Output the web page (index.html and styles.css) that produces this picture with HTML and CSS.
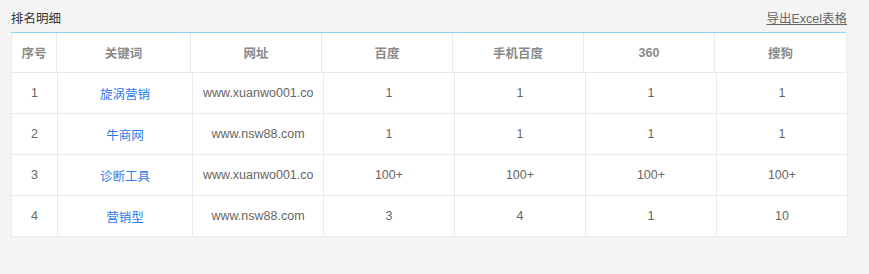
FILE: index.html
```html
<!DOCTYPE html>
<html lang="zh-CN">
<head>
    <meta charset="UTF-8">
    <title>排名明细</title>
    <link rel="stylesheet" href="styles.css">
</head>
<body>

<div class="panel">
    <div class="panel-head">
        <span class="panel-title">排名明细</span>
        <a class="export-link" href="#">导出Excel表格</a>
    </div>

    <div class="table-head">
        <table class="rank-table">
            <colgroup>
                <col class="c-no"><col class="c-kw"><col><col><col><col><col class="c-last">
            </colgroup>
            <tr>
                <th>序号</th>
                <th>关键词</th>
                <th>网址</th>
                <th>百度</th>
                <th>手机百度</th>
                <th>360</th>
                <th>搜狗</th>
            </tr>
        </table>
    </div>

    <div class="table-body">
        <table class="rank-table">
            <colgroup>
                <col class="c-no2"><col class="c-kw2"><col><col><col><col><col>
            </colgroup>
            <tr>
                <td>1</td>
                <td><a class="kw" href="#">旋涡营销</a></td>
                <td><div class="cell-url">www.xuanwo001.com</div></td>
                <td>1</td>
                <td>1</td>
                <td>1</td>
                <td>1</td>
            </tr>
            <tr>
                <td>2</td>
                <td><a class="kw" href="#">牛商网</a></td>
                <td><div class="cell-url">www.nsw88.com</div></td>
                <td>1</td>
                <td>1</td>
                <td>1</td>
                <td>1</td>
            </tr>
            <tr>
                <td>3</td>
                <td><a class="kw" href="#">诊断工具</a></td>
                <td><div class="cell-url">www.xuanwo001.com</div></td>
                <td>100+</td>
                <td>100+</td>
                <td>100+</td>
                <td>100+</td>
            </tr>
            <tr>
                <td>4</td>
                <td><a class="kw" href="#">营销型</a></td>
                <td><div class="cell-url">www.nsw88.com</div></td>
                <td>3</td>
                <td>4</td>
                <td>1</td>
                <td>10</td>
            </tr>
        </table>
    </div>
</div>

</body>
</html>
```

FILE: styles.css
```css
body {
    margin: 0;
    padding: 0;
    background-color: #f4f4f4;
    font-family: "Liberation Sans", Arial, "Noto Sans CJK SC", sans-serif;
    font-size: 12.5px;
    color: #666;
}

.panel {
    width: 836px;
    margin-left: 11px;
}

.panel-head {
    display: flex;
    justify-content: space-between;
    align-items: center;
    height: 29px;
    padding-top: 3px;
}

.panel-title {
    color: #333;
}

.export-link {
    color: #666;
    text-decoration: underline;
}

.table-head {
    width: 835px;
    border-top: 1px solid #8ed5f6;
}

.table-body {
    width: 836px;
    background-color: #fff;
}

.rank-table {
    width: 100%;
    border-collapse: collapse;
    table-layout: fixed;
    background-color: #fff;
}

.rank-table col {
    width: 131px;
}

.rank-table .c-no {
    width: 45px;
}

.rank-table .c-kw {
    width: 134px;
}

.rank-table .c-last {
    width: 132px;
}

.rank-table .c-no2 {
    width: 46px;
}

.rank-table .c-kw2 {
    width: 135px;
}

.rank-table th,
.rank-table td {
    height: 40px;
    padding: 0 10px;
    border: 1px solid #e8eaf1;
    text-align: center;
    font-weight: normal;
    color: #666;
    white-space: nowrap;
}

.rank-table th {
    height: 39px;
    padding: 0 4px;
    font-weight: bold;
    color: #8a8a8a;
}

.table-head .rank-table tr:first-child th {
    border-top: none;
}

.table-body .rank-table tr:first-child td {
    border-top: none;
}

.cell-url {
    overflow: hidden;
    white-space: nowrap;
}

.kw {
    color: #2f7bef;
    text-decoration: none;
}
```
